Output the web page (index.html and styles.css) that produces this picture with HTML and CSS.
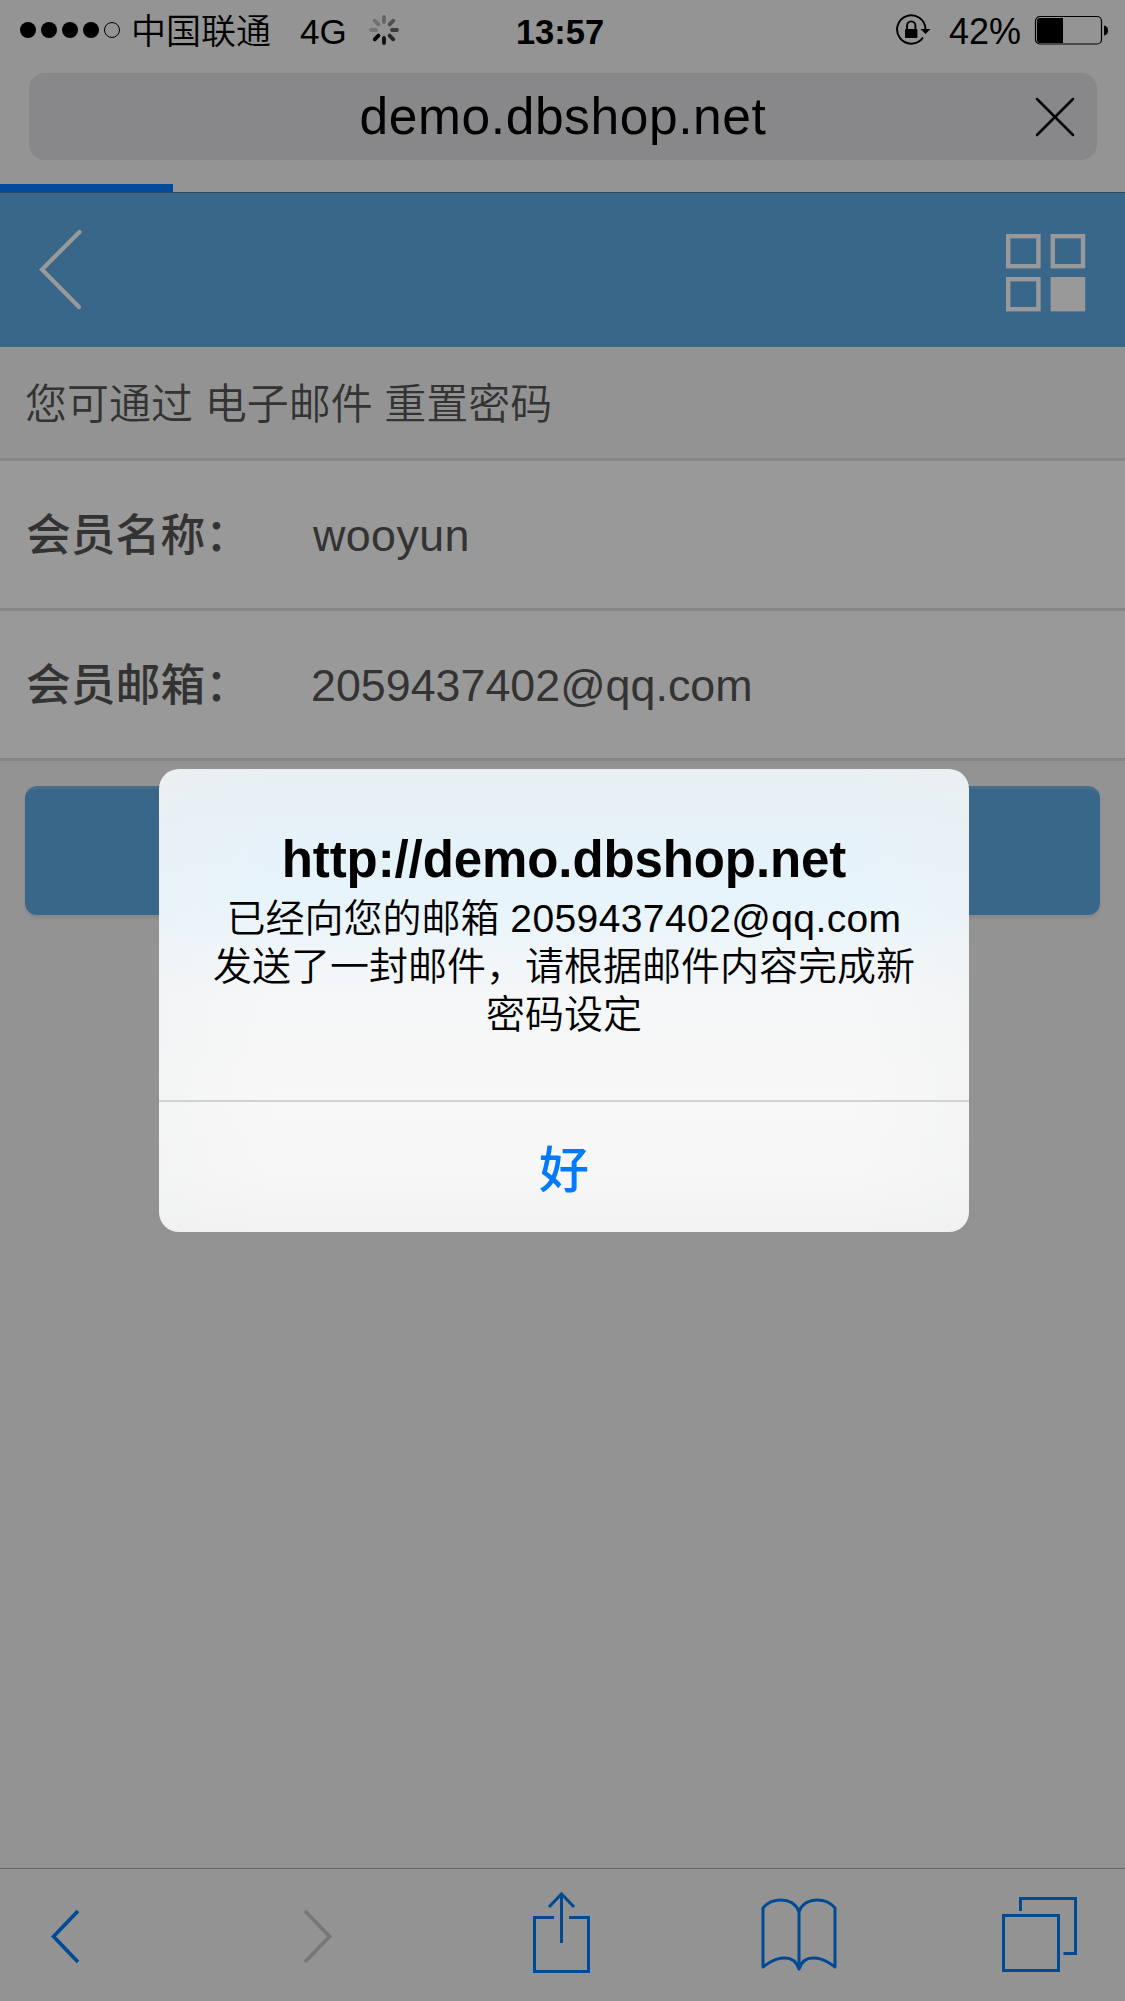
FILE: index.html
```html
<!DOCTYPE html>
<html lang="zh-CN">
<head>
<meta charset="utf-8">
<title>demo.dbshop.net</title>
<link rel="stylesheet" href="styles.css">
</head>
<body>
<div class="screen">
  <header class="browser-bar">
    <div class="status">
      <div class="status-left">
        <svg class="signal" width="102" height="18" viewBox="0 0 102 18">
          <circle cx="9" cy="9" r="8"/><circle cx="30" cy="9" r="8"/><circle cx="51" cy="9" r="8"/><circle cx="72" cy="9" r="8"/>
          <circle cx="93" cy="9" r="7.5" fill="none" stroke="#000"/>
        </svg>
        <span class="carrier">中国联通</span>
        <span class="network">4G</span>
        <svg class="spinner" width="32" height="32" viewBox="-16 -16 32 32" fill="none" stroke-width="3.8" stroke-linecap="round">
          <path d="M0-8V-13" stroke="#666"/>
          <path d="M5.6-5.6L9.3-9.3" stroke="#505050"/>
          <path d="M8 0H13" stroke="#3c3c3c"/>
          <path d="M5.6 5.6L9.3 9.3" stroke="#282828"/>
          <path d="M0 8V13" stroke="#101010"/>
          <path d="M-5.6 5.6L-9.3 9.3" stroke="#000"/>
          <path d="M-8 0H-13" stroke="#747474"/>
          <path d="M-5.6-5.6L-9.3-9.3" stroke="#707070"/>
        </svg>
      </div>
      <span class="time">13:57</span>
      <div class="status-right">
        <svg class="lock" width="36" height="32" viewBox="0 0 36 32">
          <path d="M29.500 15A14.200 14.200 0 1 0 27 23.500" fill="none" stroke="#000" stroke-width="2"/>
          <path d="M24.500 15H34.500L29.500 20Z"/>
          <rect x="9" y="15" width="12.400" height="9" rx=".8"/>
          <path d="M11 16V12A4.200 4.600 0 0 1 19.400 12V16" fill="none" stroke="#000" stroke-width="1.9"/>
        </svg>
        <span class="percent">42%</span>
        <svg class="battery" width="76" height="30" viewBox="0 0 76 30">
          <rect x="1.500" y="1.500" width="66" height="27.500" rx="4.500" fill="none" stroke="#000" stroke-width="1.2"/>
          <path d="M29 3V28H6Q3 28 3 25V6Q3 3 6 3Z"/>
          <path d="M70 10.500Q74 11 74 15.500T70 20.500Z"/>
        </svg>
      </div>
    </div>
    <div class="address">
      <span class="address-text">demo.dbshop.net</span>
      <svg class="stop" width="42" height="42" viewBox="0 0 42 42"><path d="M3 3L39 39M39 3L3 39" stroke="#000" stroke-width="2.5" stroke-linecap="round"/></svg>
    </div>
    <div class="progress"></div>
  </header>

  <main class="page">
    <nav class="page-nav">
      <svg width="46" height="84" viewBox="0 0 46 84"><path d="M41.500 4L4 41.500L41 79" fill="none" stroke="#999" stroke-width="4.200" stroke-linecap="round"/></svg>
      <svg width="80" height="78" viewBox="0 0 80 78" fill="none" stroke="#999" stroke-width="4.400">
        <rect x="2.200" y="2.200" width="30.200" height="30"/><rect x="46.800" y="2.200" width="30.200" height="30"/>
        <rect x="2.200" y="45.200" width="30.200" height="30"/><rect x="46.800" y="45.200" width="30.200" height="30" fill="#999"/>
      </svg>
    </nav>
    <p class="hint">您可通过 电子邮件 重置密码</p>
    <div class="field"><span class="field-label">会员名称：</span><span class="field-value name">wooyun</span></div>
    <div class="field"><span class="field-label">会员邮箱：</span><span class="field-value">2059437402@qq.com</span></div>
    <div class="submit"></div>
  </main>

  <footer class="toolbar">
    <svg class="back" width="32" height="60" viewBox="0 0 32 60"><path d="M28 4L3.500 29.500L28 55" /></svg>
    <svg class="forward" width="32" height="60" viewBox="0 0 32 60"><path d="M4 4L28.500 29.500L4 55"/></svg>
    <svg class="share" width="60" height="84" viewBox="0 0 60 84"><path d="M24 26.500H4.500V80.500H58.500V26.500H39M31.500 52V3M19 16L31.500 3L44 16"/></svg>
    <svg class="bookmarks" width="78" height="76" viewBox="0 0 78 76"><path d="M39 70V15C36 6 28 3 21 3C14 3 7 6 3 11V70C15 61 21 61 25 61C33 61 37 66 39 72C41 66 45 61 53 61C57 61 63 61 75 70V11C71 6 64 3 57 3C50 3 42 6 39 15" stroke-linejoin="round"/></svg>
    <svg class="tabs" width="78" height="78" viewBox="0 0 78 78"><path d="M2.500 20.500H57.500V75.500H2.500ZM19.500 16V3.500H74.500V58.500H62.500"/></svg>
  </footer>

  <section class="dialog">
    <div class="dialog-body">
      <h1 class="dialog-title">http://demo.dbshop.net</h1>
      <p class="dialog-text">已经向您的邮箱 <span class="mail">2059437402@qq.com</span><br>发送了一封邮件，请根据邮件内容完成新<br>密码设定</p>
    </div>
    <div class="dialog-action">好</div>
  </section>
</div>
</body>
</html>
```
FILE: styles.css
```css
* { box-sizing: border-box; }
body {
  margin: 0;
  font-family: "Liberation Sans", "Noto Sans CJK SC", sans-serif;
  color: #000;
  background: #939393;
}
svg { display: block; flex: none; }
.screen {
  position: relative;
  display: flex;
  flex-direction: column;
  width: 1125px;
  height: 2001px;
  overflow: hidden;
}
.browser-bar {
  height: 193px;
  background: #949494;
  border-bottom: 1px solid #28495f;
}
.status {
  display: grid;
  grid-template-columns: 1fr auto 1fr;
  align-items: center;
  height: 60px;
  padding: 0 15px 0 19px;
  margin-bottom: 13px;
  font-size: 35px;
  line-height: 56px;
}
.status span { padding-top: 4px; white-space: nowrap; }
.status-left, .status-right { display: flex; align-items: center; }
.status-right { justify-content: flex-end; }
.carrier { margin-left: 10px; font-weight: 350; }
.network { margin-left: 29px; }
.spinner { margin-left: 21px; }
.time { margin-right: 9px; font-weight: bold; font-size: 34.5px; }
.lock { margin-right: 17px; }
.percent { font-size: 36px; }
.battery { margin-left: 13px; }
.address {
  display: flex;
  align-items: center;
  height: 87px;
  margin: 0 28px 24px 29px;
  padding: 0 21px 0 63px;
  border-radius: 16px;
  background: #88888a;
}
.address-text {
  flex: 1;
  text-align: center;
  font-size: 51.5px;
  line-height: 87px;
  letter-spacing: .6px;
}
.progress { width: 173px; height: 8px; background: #004a99; }

.page { flex: 1; color: #333; }
.page-nav {
  display: flex;
  justify-content: space-between;
  align-items: flex-start;
  height: 154px;
  padding: 35px 39px 0 38px;
  background: #39678a;
}
.page-nav svg + svg { margin-top: 6px; }
.hint {
  margin: 0;
  height: 114px;
  padding: 4px 25px 0;
  border-bottom: 3px solid #868686;
  background: #939393;
  font-size: 42px;
  font-weight: 350;
  line-height: 108px;
}
.field {
  display: flex;
  height: 150px;
  padding: 1px 26px 0;
  border-bottom: 3px solid #868686;
  background: #999;
  font-size: 44.8px;
  line-height: 147px;
}
.field-label { width: 285px; font-weight: 500; white-space: nowrap; }
.name { padding-left: 2px; letter-spacing: .4px; }
.submit {
  height: 129px;
  margin: 25px;
  border-top: 3px solid #456e8c;
  border-radius: 12px;
  background: #39678a;
  box-shadow: 0 3px 3px rgba(0, 0, 0, .08);
}

.toolbar {
  display: flex;
  align-items: flex-start;
  height: 133px;
  padding: 22px 46px 0 50px;
  border-top: 1px solid #666;
  background: #939393;
  fill: none;
  stroke: #004a94;
  stroke-width: 3;
}
.back { margin-top: 16px; stroke-width: 3.7; }
.forward { margin: 16px 0 0 219px; stroke: #777; stroke-width: 3.7; }
.share { margin-left: 197px; }
.bookmarks { margin: 6px 0 0 170px; }
.tabs { margin: 4px 0 0 163px; }

.dialog {
  position: absolute;
  left: 159px;
  top: 769px;
  width: 810px;
  height: 463px;
  border-radius: 20px;
  overflow: hidden;
  background:
    linear-gradient(90deg, rgba(238, 240, 241, .4), rgba(240, 242, 243, 0) 14%, rgba(240, 242, 243, 0) 86%, rgba(238, 240, 241, .4)),
    linear-gradient(180deg, #e9eff2 0%, #e6f2fa 16%, #e7f4fc 29%, #f0f6fa 40%, #f6f7f8 50%, #f8f8f8 72%, #f7f7f7 87%, #f2f2f2 100%);
  text-align: center;
}
.dialog-body { height: 333px; padding-top: 60px; border-bottom: 2px solid #d0d1d1; }
.dialog-title {
  margin: 0 0 4px;
  font-size: 51px;
  line-height: 62px;
  letter-spacing: -.1px;
}
.dialog-text { margin: 0; font-size: 39px; font-weight: 350; line-height: 48px; }
.mail { letter-spacing: .4px; }
.dialog-action {
  padding-top: 9px;
  color: #007aff;
  font-size: 50px;
  font-weight: 500;
  line-height: 121px;
}
```
